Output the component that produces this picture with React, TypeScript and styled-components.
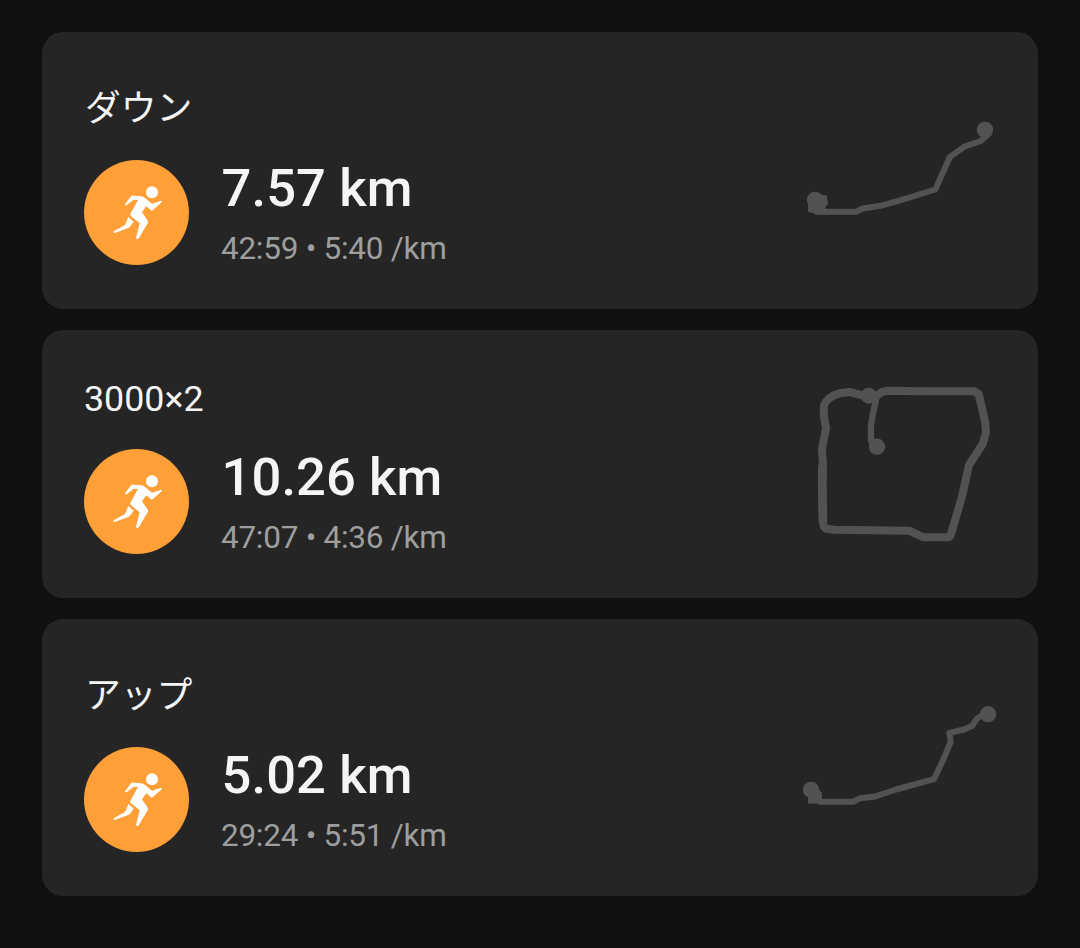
import React from 'react';
import styled, { createGlobalStyle } from 'styled-components';

const GlobalStyle = createGlobalStyle`
  body {
    margin: 0;
    background: #101010;
    font-family: Roboto, 'Noto Sans CJK JP', sans-serif;
  }
`;

const Page = styled.main`
  box-sizing: border-box;
  min-height: 948px;
  padding: 32px 42px 52px;
  display: flex;
  flex-direction: column;
  gap: 21px;
  background: #101010;
`;

const Card = styled.article<{ $tall: boolean }>`
  box-sizing: border-box;
  height: ${({ $tall }) => ($tall ? 277 : 268)}px;
  padding: 42px;
  border-radius: 21px;
  background: #252525;
  display: flex;
  align-items: center;
  justify-content: space-between;
`;

const Details = styled.div`
  align-self: flex-start;
`;

const Title = styled.h2<{ $tall: boolean }>`
  box-sizing: border-box;
  margin: 0 0 21px;
  padding-top: ${({ $tall }) => ($tall ? 8 : 5)}px;
  padding-left: ${({ $tall }) => ($tall ? 1 : 0)}px;
  font-size: 35.8px;
  font-weight: 400;
  line-height: ${({ $tall }) => ($tall ? 54 : 45)}px;
  height: ${({ $tall }) => ($tall ? 65 : 56)}px;
  color: #f5f5f5;
`;

const Summary = styled.div`
  display: flex;
  align-items: center;
  gap: 32px;
`;

const Badge = styled.div`
  width: 105px;
  height: 105px;
  border-radius: 50%;
  background: #ff9f38;
`;

const Stats = styled.div`
  display: flex;
  flex-direction: column;
`;

const Distance = styled.div`
  padding-left: 0.5px;
  font-size: 52.5px;
  font-weight: 500;
  line-height: 56px;
  letter-spacing: 0.1px;
  color: #f5f5f5;
  white-space: pre;
`;

const Pace = styled.div`
  margin-top: 17px;
  font-size: 31.5px;
  line-height: 32px;
  letter-spacing: -0.27px;
  color: #9e9e9e;
  white-space: pre;
`;

const RouteMap = styled.svg`
  width: 206px;
  height: 180px;
  flex: none;
  color: #525252;
`;

const RunnerIcon = () => (
  <svg width="105" height="105" viewBox="0 0 315 315" fill="#fff" display="block">
    <circle cx="204" cy="96.500" r="18" />
    <path d="M123 133 L140 110 Q143 106 149 107 L172 109 Q180 110 186 116 L204 131 L231 122 Q235 123 233 127 L207 150 Q204 153 200 150 L187 139 L174 157 L190 180 Q194 185 191 190 L165 234 Q160 240 156 234 L167 190 L141 169 Q137 165 140 160 L162 120 L149 119 L129 135 Q123 138 123 133 Z" />
    <path d="M133 171 L149 185 L139 199 Q136 203 131 205 L92 219 Q86 219 89 214 L119 197 Q123 195 125 191 Z" />
  </svg>
);

const RouteDown = () => (
  <RouteMap viewBox="0 -58.5 618 540" fill="none" stroke="currentColor" strokeLinejoin="round">
    <circle cx="585" cy="88" r="24.500" fill="currentColor" stroke="none" />
    <circle cx="75" cy="298" r="24.500" fill="currentColor" stroke="none" />
    <path d="M54 298 L54 334 L80 341 L105 341 L105 322 L114 310 L110 285 L90 282 Z" fill="currentColor" stroke="none" />
    <path d="M75 334 L198 334 L218 324 L272 316 L345 295 L436 267 L480 169 L524 138 L573 121 L600 97" strokeWidth="18" />
  </RouteMap>
);

const RouteLoop = () => (
  <RouteMap viewBox="-30 12 618 540" fill="none" stroke="currentColor" strokeLinejoin="round" strokeLinecap="round">
    <path d="M205 77 L188 76 L148 66 L118 70 Q82 80 72 106 L71 132 L78 176 L66 236 L69 285 L66 350 L69 455 Q69 470 77 476 L105 479 L328 482 L370 502 L445 502 Q451 500 453 492 L486 380 L507 285 L548 222 L558 188 L556 158 L536 72 L524 64 L380 64 L262 62 Q242 64 230 78 Z" strokeWidth="24" />
    <path d="M229 85 L219 130 L213 165 L213 212 L230 230" strokeWidth="19" />
    <path d="M67 290 L67 350 L69 455" strokeWidth="26" />
    <circle cx="206" cy="77" r="24" fill="currentColor" stroke="none" />
    <circle cx="231" cy="230" r="24.500" fill="currentColor" stroke="none" />
  </RouteMap>
);

const RouteUp = () => (
  <RouteMap viewBox="0 -67.5 618 540" fill="none" stroke="currentColor" strokeLinejoin="round">
    <circle cx="594" cy="71" r="24.500" fill="currentColor" stroke="none" />
    <circle cx="63" cy="298" r="24.500" fill="currentColor" stroke="none" />
    <path d="M54 305 L54 339 L80 340 L97 332 L95 306 L84 295 Z" fill="currentColor" stroke="none" />
    <path d="M85 330 L92 334 L190 334 L210 323 L256 318 L318 297 L432 266 L460 207 L482 155 L478 127 L522 117 L547 106 L560 85 L577 73" strokeWidth="18" />
  </RouteMap>
);

interface Activity {
  title: string;
  distance: string;
  duration: string;
  pace: string;
  tall: boolean;
  Route: React.FC;
}

const activities: Activity[] = [
  { title: 'ダウン', distance: '7.57 km', duration: '42:59', pace: '5:40 /km', tall: true, Route: RouteDown },
  { title: '3000×2', distance: '10.26 km', duration: '47:07', pace: '4:36 /km', tall: false, Route: RouteLoop },
  { title: 'アップ', distance: '5.02 km', duration: '29:24', pace: '5:51 /km', tall: true, Route: RouteUp },
];

export default function App() {
  return (
    <>
      <GlobalStyle />
      <Page>
        {activities.map(({ title, distance, duration, pace, tall, Route }) => (
          <Card key={title} $tall={tall}>
            <Details>
              <Title $tall={tall}>{title}</Title>
              <Summary>
                <Badge>
                  <RunnerIcon />
                </Badge>
                <Stats>
                  <Distance>{distance}</Distance>
                  <Pace>{`${duration} • ${pace}`}</Pace>
                </Stats>
              </Summary>
            </Details>
            <Route />
          </Card>
        ))}
      </Page>
    </>
  );
}
